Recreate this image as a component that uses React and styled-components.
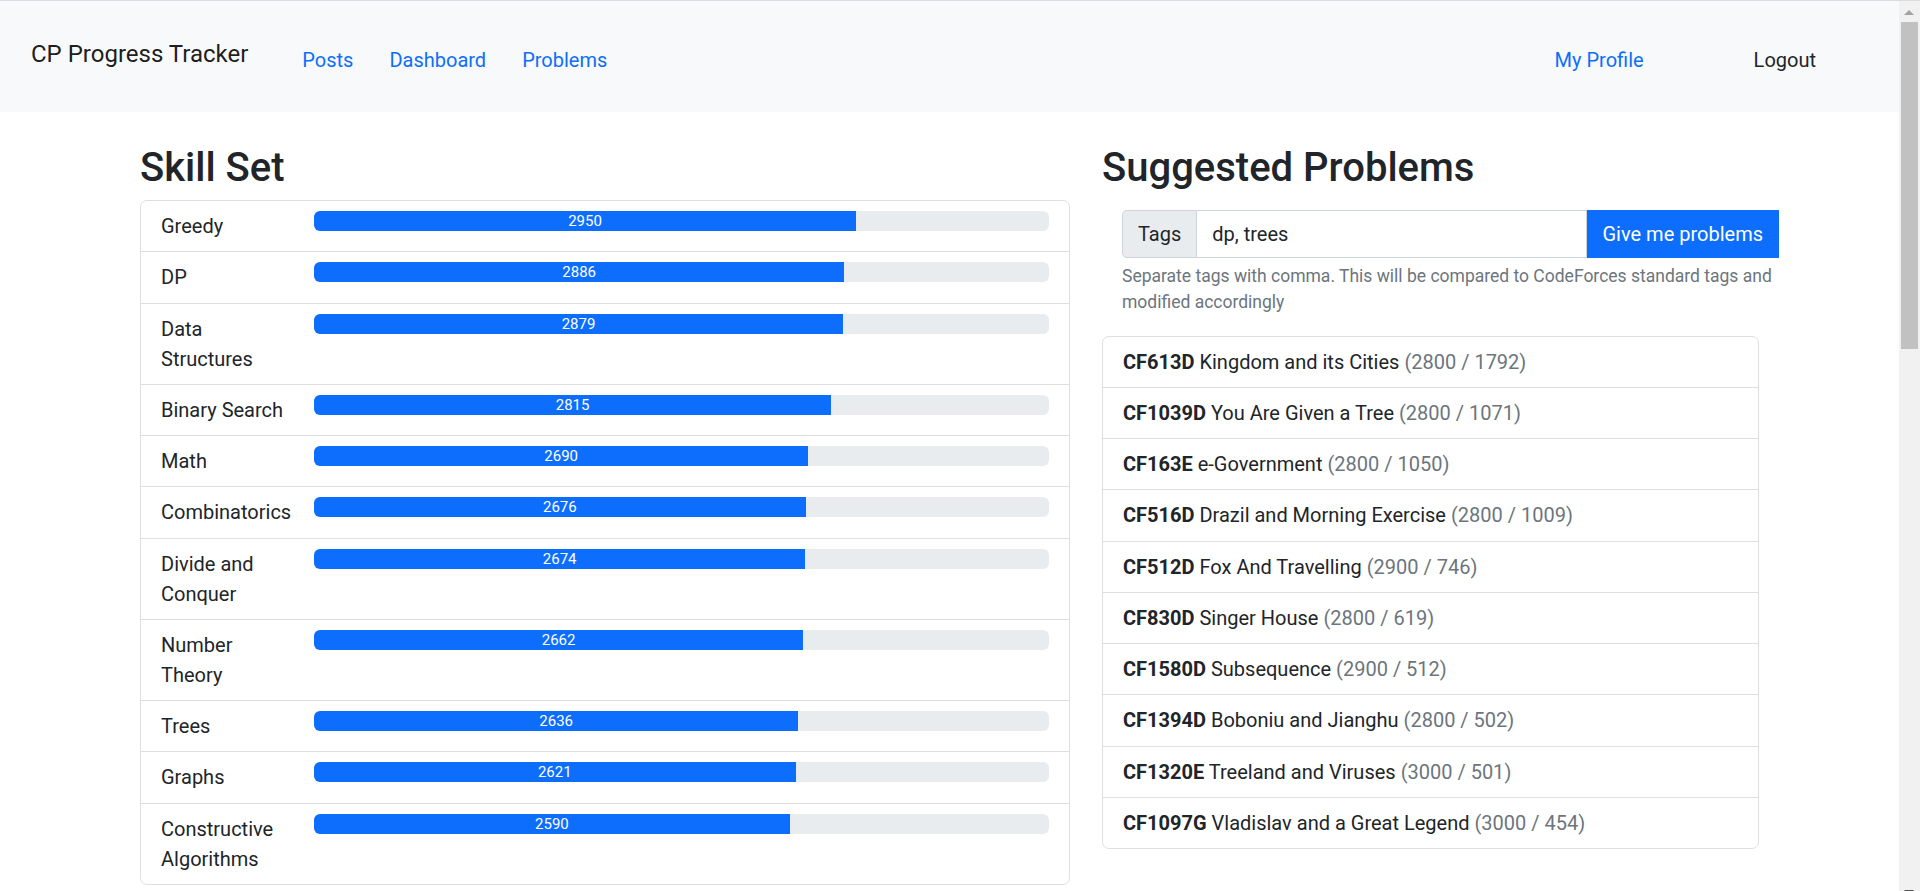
import React, { useState } from "react";
import styled, { createGlobalStyle } from "styled-components";

const GlobalStyle = createGlobalStyle`
  html, body {
    margin: 0;
    padding: 0;
    background: #fff;
    overflow: hidden;
  }
  body {
    font-family: Roboto, "Liberation Sans", Arial, sans-serif;
    font-size: 20px;
    line-height: 1.5;
    color: #212529;
  }
  *, *::before, *::after {
    box-sizing: border-box;
  }
`;

const Shell = styled.div`
  margin-right: 21px;
`;

// the browser's scrollbar, drawn over the right edge
const Scrollbar = styled.div`
  position: fixed;
  top: 0;
  right: 0;
  bottom: -12px;
  width: 21px;
  background: #f1f1f1;
  border-top: 1px solid #dadce0;
`;

const ScrollArrow = styled.div`
  position: absolute;
  left: 5px;
  width: 0;
  height: 0;
  border-left: 5px solid transparent;
  border-right: 5px solid transparent;
  ${(p) =>
    p.$down
      ? "bottom: 8px; border-top: 5px solid #505050;"
      : "top: 9px; border-bottom: 5px solid #a3a3a3;"}
`;

const ScrollThumb = styled.div`
  position: absolute;
  top: 21px;
  left: 2px;
  right: 2px;
  height: 327px;
  background: #c1c1c1;
`;

const Navbar = styled.nav`
  display: flex;
  align-items: center;
  height: 112px;
  padding: 0 83px 0 31px;
  background: #f8f9fa;
  border-top: 1px solid #dadce0;
`;

const Brand = styled.a`
  font-size: 24px;
  line-height: 1.5;
  color: rgba(0, 0, 0, 0.9);
  margin-bottom: 6px;
  margin-right: 36px;
  text-decoration: none;
  white-space: nowrap;
`;

const NavLinks = styled.div`
  display: flex;
  align-items: center;
  margin-top: 6px;
  margin-left: ${(p) => (p.$right ? "auto" : "0")};
`;

const NavLink = styled.a`
  padding: 10px 18px;
  color: ${(p) => (p.$dark ? "#212529" : "#0d6efd")};
  text-decoration: none;
  white-space: nowrap;
  margin-left: ${(p) => (p.$spaced ? "74px" : "0")};
  padding-right: ${(p) => (p.$last ? "0" : "18px")};
`;

const Page = styled.main`
  display: grid;
  grid-template-columns: 930px 657px;
  column-gap: 32px;
  justify-content: center;
  align-items: start;
  padding: 32px 0 40px;
`;

const Column = styled.section`
  min-width: 0;
`;

const Heading = styled.h2`
  margin: 0 0 8px;
  font-size: 40px;
  font-weight: 500;
  line-height: 1.2;
`;

const ListGroup = styled.ul`
  list-style: none;
  margin: 0;
  padding: 0;
  border: 1px solid #dfdfdf;
  border-radius: 7px;
  overflow: hidden;
`;

const SkillItem = styled.li`
  display: grid;
  grid-template-columns: 133px 1fr;
  column-gap: 20px;
  align-items: start;
  padding: 10.125px 20px;
  & + & {
    border-top: 1px solid #dfdfdf;
  }
`;

const SkillName = styled.div`
  line-height: 30px;
`;

const Progress = styled.div`
  display: flex;
  height: 20px;
  background: #e9ecef;
  border-radius: 6px;
  overflow: hidden;
`;

const ProgressFill = styled.div`
  display: flex;
  align-items: center;
  justify-content: center;
  background: #0d6efd;
  color: #fff;
  font-size: 15px;
  line-height: 20px;
  white-space: nowrap;
`;

const TagForm = styled.form`
  width: 100%;
  margin: 18px 0 20px 20px;
`;

const InputGroup = styled.div`
  display: flex;
  height: 48px;
`;

const Addon = styled.span`
  display: flex;
  align-items: center;
  padding: 0 15px;
  background: #e9ecef;
  border: 1px solid #ced4da;
  border-radius: 5px 0 0 5px;
`;

const TagInput = styled.input`
  flex: 1;
  min-width: 0;
  padding: 0 15px;
  font: inherit;
  color: #212529;
  border: 1px solid #ced4da;
  border-left: none;
  outline: none;
  background: #fff;
`;

const SubmitButton = styled.button`
  padding: 0 15px;
  font: inherit;
  color: #fff;
  background: #0d6efd;
  border: 1px solid #0d6efd;
  border-radius: 0;
  cursor: pointer;
`;

const HelpText = styled.div`
  margin-top: 5px;
  font-size: 17.5px;
  line-height: 1.5;
  color: #6c757d;
`;

const ProblemItem = styled.li`
  padding: 10.125px 20px;
  line-height: 30px;
  & + & {
    border-top: 1px solid #dfdfdf;
  }
`;

const ProblemCode = styled.b`
  font-weight: 700;
`;

const Muted = styled.span`
  color: #6c757d;
`;

const skills = [
  ["Greedy", 2950],
  ["DP", 2886],
  ["Data Structures", 2879],
  ["Binary Search", 2815],
  ["Math", 2690],
  ["Combinatorics", 2676],
  ["Divide and Conquer", 2674],
  ["Number Theory", 2662],
  ["Trees", 2636],
  ["Graphs", 2621],
  ["Constructive Algorithms", 2590],
];

const problems = [
  ["CF613D", "Kingdom and its Cities", 2800, 1792],
  ["CF1039D", "You Are Given a Tree", 2800, 1071],
  ["CF163E", "e-Government", 2800, 1050],
  ["CF516D", "Drazil and Morning Exercise", 2800, 1009],
  ["CF512D", "Fox And Travelling", 2900, 746],
  ["CF830D", "Singer House", 2800, 619],
  ["CF1580D", "Subsequence", 2900, 512],
  ["CF1394D", "Boboniu and Jianghu", 2800, 502],
  ["CF1320E", "Treeland and Viruses", 3000, 501],
  ["CF1097G", "Vladislav and a Great Legend", 3000, 454],
];

const MAX_RATING = 4000;

export default function App() {
  const [tags, setTags] = useState("dp, trees");

  return (
    <>
      <GlobalStyle />
      <Shell>
        <Navbar>
          <Brand href="#">CP Progress Tracker</Brand>
          <NavLinks>
            <NavLink href="#">Posts</NavLink>
            <NavLink href="#">Dashboard</NavLink>
            <NavLink href="#">Problems</NavLink>
          </NavLinks>
          <NavLinks $right>
            <NavLink href="#">My Profile</NavLink>
            <NavLink href="#" $dark $spaced $last>
              Logout
            </NavLink>
          </NavLinks>
        </Navbar>

        <Page>
          <Column>
            <Heading>Skill Set</Heading>
            <ListGroup>
              {skills.map(([name, rating]) => (
                <SkillItem key={name}>
                  <SkillName>{name}</SkillName>
                  <Progress>
                    <ProgressFill style={{ width: `${(rating / MAX_RATING) * 100}%` }}>
                      {rating}
                    </ProgressFill>
                  </Progress>
                </SkillItem>
              ))}
            </ListGroup>
          </Column>

          <Column>
            <Heading>Suggested Problems</Heading>
            <TagForm onSubmit={(e) => e.preventDefault()}>
              <InputGroup>
                <Addon>Tags</Addon>
                <TagInput value={tags} onChange={(e) => setTags(e.target.value)} />
                <SubmitButton type="submit">Give me problems</SubmitButton>
              </InputGroup>
              <HelpText>
                Separate tags with comma. This will be compared to CodeForces standard tags and
                modified accordingly
              </HelpText>
            </TagForm>
            <ListGroup>
              {problems.map(([code, name, rating, solved]) => (
                <ProblemItem key={code}>
                  <ProblemCode>{code}</ProblemCode> {name} <Muted>({rating} / {solved})</Muted>
                </ProblemItem>
              ))}
            </ListGroup>
          </Column>
        </Page>
      </Shell>

      <Scrollbar>
        <ScrollArrow />
        <ScrollThumb />
        <ScrollArrow $down />
      </Scrollbar>
    </>
  );
}
